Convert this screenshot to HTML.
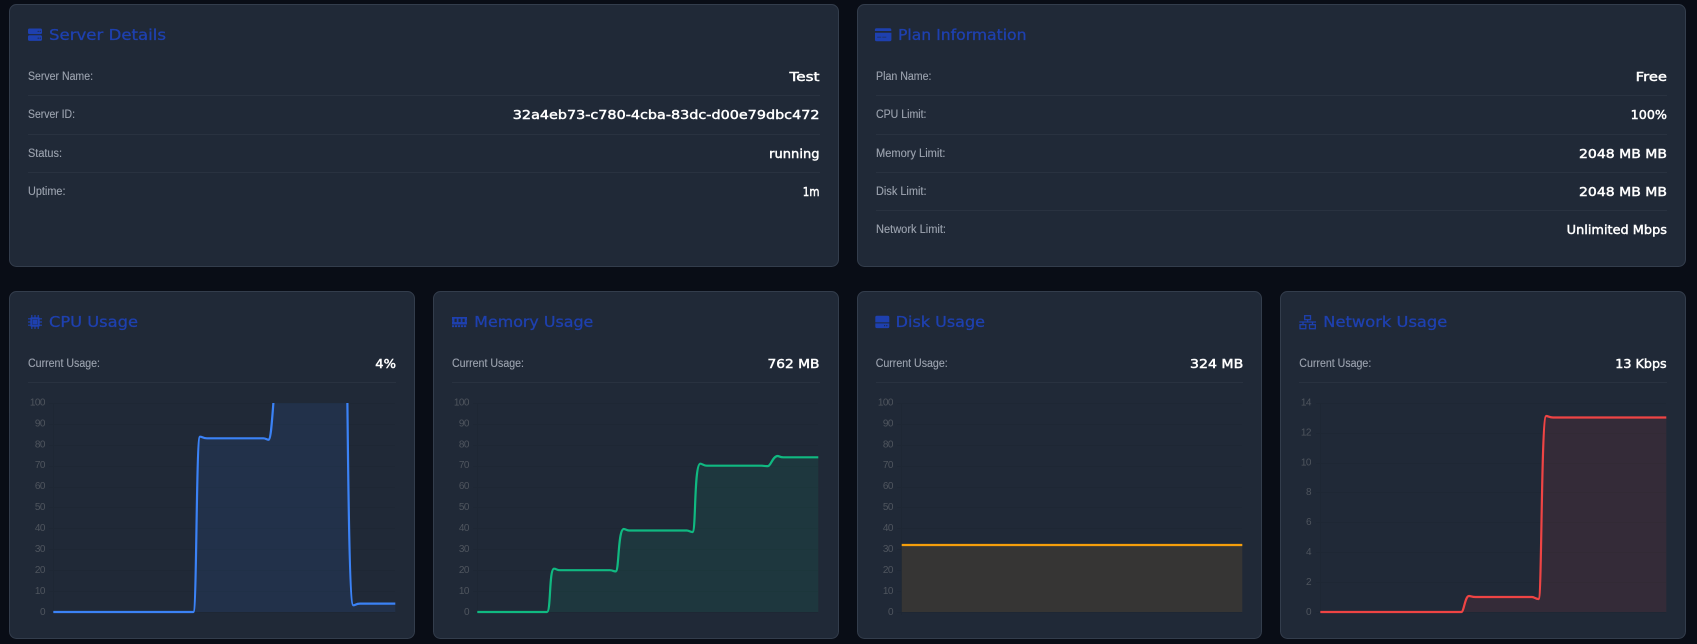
<!DOCTYPE html>
<html lang="en">
<head>
<meta charset="utf-8">
<title>Server Dashboard</title>
<style>
html,body{margin:0;padding:0;background:#090d16;width:1697px;height:644px;overflow:hidden}
svg{display:block}
.card{fill:#202937;stroke:#333d4c;stroke-width:1}
.t{font-family:"DejaVu Sans",sans-serif;font-size:15px;fill:#1e40af;stroke:#1e40af;stroke-width:.3}
.l{font-family:"Liberation Sans",sans-serif;font-size:11.5px;fill:#9ca3af;stroke:#9ca3af;stroke-width:.12}
.v{font-family:"DejaVu Sans",sans-serif;font-size:12.5px;fill:#fff;stroke:#fff;stroke-width:.45;text-anchor:end}
.d{stroke:#293240;stroke-width:1}
.g{stroke:#1e2734;stroke-width:1}
.y{font-family:"Liberation Sans",sans-serif;font-size:10px;fill:#4f555e;text-anchor:end;letter-spacing:-.5px}
.i{fill:#1e40af}
.li{fill:none;stroke-width:2.2}
</style>
</head>
<body>
<svg width="1697" height="644" viewBox="0 0 1697 644" xmlns="http://www.w3.org/2000/svg">
<defs>
<clipPath id="c1"><rect x="50" y="403" width="346" height="211"/></clipPath>
<clipPath id="c2"><rect x="474" y="403" width="346" height="211"/></clipPath>
<clipPath id="c3"><rect x="898" y="403" width="346" height="211"/></clipPath>
<clipPath id="c4"><rect x="1317" y="403" width="350" height="211"/></clipPath>
</defs>

<!-- Cards -->
<rect class="card" x="9.5" y="4.5" width="829" height="262" rx="7"/>
<rect class="card" x="857.5" y="4.5" width="828" height="262" rx="7"/>
<rect class="card" x="9.5" y="291.5" width="405" height="347" rx="7"/>
<rect class="card" x="433.5" y="291.5" width="405" height="347" rx="7"/>
<rect class="card" x="857.5" y="291.5" width="404" height="347" rx="7"/>
<rect class="card" x="1280.5" y="291.5" width="405" height="347" rx="7"/>

<!-- Server Details -->
<rect class="i" x="28" y="28.5" width="14" height="5.6" rx="1.5"/>
<rect class="i" x="28" y="35.3" width="14" height="5.6" rx="1.5"/>
<circle cx="38.2" cy="31.3" r=".6" fill="#202937"/><circle cx="40.2" cy="31.3" r=".6" fill="#202937"/>
<circle cx="38.2" cy="38.1" r=".6" fill="#202937"/><circle cx="40.2" cy="38.1" r=".6" fill="#202937"/>
<text class="t" x="49" y="40" textLength="117" lengthAdjust="spacingAndGlyphs">Server Details</text>
<text class="l" x="28" y="80" textLength="65" lengthAdjust="spacingAndGlyphs">Server Name:</text>
<text class="v" x="819.5" y="81" textLength="30" lengthAdjust="spacingAndGlyphs">Test</text>
<line class="d" x1="28" x2="820" y1="95.5" y2="95.5"/>
<text class="l" x="28" y="118" textLength="47" lengthAdjust="spacingAndGlyphs">Server ID:</text>
<text class="v" x="819.5" y="119" textLength="306.7" lengthAdjust="spacingAndGlyphs">32a4eb73-c780-4cba-83dc-d00e79dbc472</text>
<line class="d" x1="28" x2="820" y1="134.5" y2="134.5"/>
<text class="l" x="28" y="157" textLength="34" lengthAdjust="spacingAndGlyphs">Status:</text>
<text class="v" x="819.5" y="158" textLength="50.3" lengthAdjust="spacingAndGlyphs">running</text>
<line class="d" x1="28" x2="820" y1="172.5" y2="172.5"/>
<text class="l" x="28" y="195" textLength="37.5" lengthAdjust="spacingAndGlyphs">Uptime:</text>
<text class="v" x="819.5" y="196" textLength="16.7" lengthAdjust="spacingAndGlyphs">1m</text>

<!-- Plan Information -->
<path class="i" d="M876.5 28.2h13.2a1.6 1.6 0 0 1 1.6 1.6v1.2h-16.4v-1.2a1.6 1.6 0 0 1 1.6-1.6z"/>
<path class="i" d="M875 32.8h16.4v6.8a1.6 1.6 0 0 1-1.6 1.6h-13.2a1.6 1.6 0 0 1-1.6-1.6z"/>
<rect x="877.2" y="36.8" width="4" height=".7" fill="#202937" opacity=".8"/><rect x="882.3" y="36.8" width="4" height=".7" fill="#202937" opacity=".8"/>
<text class="t" x="898" y="40" textLength="128.5" lengthAdjust="spacingAndGlyphs">Plan Information</text>
<text class="l" x="876" y="80" textLength="55.5" lengthAdjust="spacingAndGlyphs">Plan Name:</text>
<text class="v" x="1667" y="81" textLength="31.3" lengthAdjust="spacingAndGlyphs">Free</text>
<line class="d" x1="876" x2="1667" y1="95.5" y2="95.5"/>
<text class="l" x="876" y="118" textLength="50.5" lengthAdjust="spacingAndGlyphs">CPU Limit:</text>
<text class="v" x="1667" y="119" textLength="36.3" lengthAdjust="spacingAndGlyphs">100%</text>
<line class="d" x1="876" x2="1667" y1="134.5" y2="134.5"/>
<text class="l" x="876" y="157" textLength="69.5" lengthAdjust="spacingAndGlyphs">Memory Limit:</text>
<text class="v" x="1667" y="158" textLength="88" lengthAdjust="spacingAndGlyphs">2048 MB MB</text>
<line class="d" x1="876" x2="1667" y1="172.5" y2="172.5"/>
<text class="l" x="876" y="195" textLength="50.5" lengthAdjust="spacingAndGlyphs">Disk Limit:</text>
<text class="v" x="1667" y="196" textLength="88" lengthAdjust="spacingAndGlyphs">2048 MB MB</text>
<line class="d" x1="876" x2="1667" y1="210.5" y2="210.5"/>
<text class="l" x="876" y="233" textLength="70" lengthAdjust="spacingAndGlyphs">Network Limit:</text>
<text class="v" x="1667" y="234" textLength="100.3" lengthAdjust="spacingAndGlyphs">Unlimited Mbps</text>

<!-- CPU -->
<rect class="i" x="30.3" y="317.3" width="9.4" height="9.4" rx="1"/>
<rect x="32.4" y="319.4" width="5.2" height="5.2" fill="none" stroke="#202937" stroke-width=".5" opacity=".7"/>
<path d="M31.8 315v14M35 315v14M38.2 315v14M28 318.8h14M28 322h14M28 325.2h14" stroke="#1e40af" stroke-width="1.2" fill="none" stroke-dasharray="2.6 8.8 2.6 0"/>
<text class="t" x="49" y="327" textLength="89" lengthAdjust="spacingAndGlyphs">CPU Usage</text>
<text class="l" x="28" y="367" textLength="72" lengthAdjust="spacingAndGlyphs">Current Usage:</text>
<text class="v" x="396" y="368" textLength="20.7" lengthAdjust="spacingAndGlyphs">4%</text>
<line class="d" x1="28" x2="396" y1="382.5" y2="382.5"/>
<path class="g" fill="none" d="M49 403.5h346M49 424.5h346M49 445.5h346M49 466.5h346M49 487.5h346M49 507.5h346M49 528.5h346M49 549.5h346M49 570.5h346M49 591.5h346M49 612.5h346M53.5 403v212"/>
<g class="y">
<text x="45" y="405.5">100</text><text x="45" y="426.5">90</text><text x="45" y="447.5">80</text><text x="45" y="468">70</text><text x="45" y="489">60</text><text x="45" y="510">50</text><text x="45" y="531">40</text><text x="45" y="552">30</text><text x="45" y="573">20</text><text x="45" y="594">10</text><text x="45" y="615">0</text>
</g>
<g clip-path="url(#c1)">
<path d="M53.3 612L193.3 612C197 612 196 437 200 436.7C202 436.6 203 438.3 207 438.3L263.3 438.3C266 438.3 267 440 268.7 439.7C271 439 272 420 274 395L347.3 395C348 450 349 605 353.3 605.3C355 605.4 356 603.6 360 603.6L395.3 603.6L395.3 612Z" fill="#3b82f6" opacity=".1"/>
<path class="li" stroke="#3b82f6" d="M53.3 612L193.3 612C197 612 196 437 200 436.7C202 436.6 203 438.3 207 438.3L263.3 438.3C266 438.3 267 440 268.7 439.7C271 439 272 420 274 395M347.3 395C348 450 349 605 353.3 605.3C355 605.4 356 603.6 360 603.6L395.3 603.6"/>
</g>

<!-- Memory -->
<path class="i" d="M452 317h15v3.2a1 1 0 0 0 0 1.6v2.7h-15v-2.7a1 1 0 0 0 0-1.6z"/>
<rect x="454.5" y="318.7" width="2.2" height="3.4" fill="#202937"/><rect x="458.5" y="318.7" width="2.2" height="3.4" fill="#202937"/><rect x="462.5" y="318.7" width="2.2" height="3.4" fill="#202937"/>
<path d="M452 326.2h15" stroke="#1e40af" stroke-width="1.8" stroke-dasharray="2.2 .8" fill="none"/>
<text class="t" x="474.3" y="327" textLength="119" lengthAdjust="spacingAndGlyphs">Memory Usage</text>
<text class="l" x="452" y="367" textLength="72" lengthAdjust="spacingAndGlyphs">Current Usage:</text>
<text class="v" x="819.5" y="368" textLength="52" lengthAdjust="spacingAndGlyphs">762 MB</text>
<line class="d" x1="452" x2="820" y1="382.5" y2="382.5"/>
<path class="g" fill="none" d="M473 403.5h345M473 424.5h345M473 445.5h345M473 466.5h345M473 487.5h345M473 507.5h345M473 528.5h345M473 549.5h345M473 570.5h345M473 591.5h345M473 612.5h345M477.5 403v212"/>
<g class="y">
<text x="469" y="405.5">100</text><text x="469" y="426.5">90</text><text x="469" y="447.5">80</text><text x="469" y="468">70</text><text x="469" y="489">60</text><text x="469" y="510">50</text><text x="469" y="531">40</text><text x="469" y="552">30</text><text x="469" y="573">20</text><text x="469" y="594">10</text><text x="469" y="615">0</text>
</g>
<g clip-path="url(#c2)">
<path d="M477.3 612L547 612C551 612 549 569 554 568.7C556 568.6 557 570.2 560 570.2L610 570.2C613 570.2 614 571.8 616 571.3C619 570 618 529.5 623.7 529C625.5 528.9 626.5 530.5 629 530.5L686.7 530.5C689 530.5 690.5 532.3 692.7 532C696 531 694 464 700.3 463.7C702 463.6 703.5 465.7 706.7 465.7L761.7 465.7C764 465.7 766 466.5 768.3 466C771 465 773 456 777.7 456C779 456 780 457.3 783.3 457.3L818.3 457.3L818.3 612Z" fill="#10b981" opacity=".1"/>
<path class="li" stroke="#10b981" d="M477.3 612L547 612C551 612 549 569 554 568.7C556 568.6 557 570.2 560 570.2L610 570.2C613 570.2 614 571.8 616 571.3C619 570 618 529.5 623.7 529C625.5 528.9 626.5 530.5 629 530.5L686.7 530.5C689 530.5 690.5 532.3 692.7 532C696 531 694 464 700.3 463.7C702 463.6 703.5 465.7 706.7 465.7L761.7 465.7C764 465.7 766 466.5 768.3 466C771 465 773 456 777.7 456C779 456 780 457.3 783.3 457.3L818.3 457.3"/>
</g>

<!-- Disk -->
<path class="i" d="M876.8 315.7h11a1.5 1.5 0 0 1 1.5 1.5v5.2h-14v-5.2a1.5 1.5 0 0 1 1.5-1.5z"/>
<path class="i" d="M875.3 323.4h14v3.2a1.5 1.5 0 0 1-1.5 1.5h-11a1.5 1.5 0 0 1-1.5-1.5z"/>
<circle cx="884.6" cy="325.7" r=".6" fill="#202937"/><circle cx="886.8" cy="325.7" r=".6" fill="#202937"/>
<text class="t" x="895.7" y="327" textLength="89.3" lengthAdjust="spacingAndGlyphs">Disk Usage</text>
<text class="l" x="875.7" y="367" textLength="72" lengthAdjust="spacingAndGlyphs">Current Usage:</text>
<text class="v" x="1243.3" y="368" textLength="53.3" lengthAdjust="spacingAndGlyphs">324 MB</text>
<line class="d" x1="876" x2="1243" y1="382.5" y2="382.5"/>
<path class="g" fill="none" d="M897 403.5h345M897 424.5h345M897 445.5h345M897 466.5h345M897 487.5h345M897 507.5h345M897 528.5h345M897 549.5h345M897 570.5h345M897 591.5h345M897 612.5h345M901.5 403v212"/>
<g class="y">
<text x="893" y="405.5">100</text><text x="893" y="426.5">90</text><text x="893" y="447.5">80</text><text x="893" y="468">70</text><text x="893" y="489">60</text><text x="893" y="510">50</text><text x="893" y="531">40</text><text x="893" y="552">30</text><text x="893" y="573">20</text><text x="893" y="594">10</text><text x="893" y="615">0</text>
</g>
<rect x="901.7" y="545" width="340.6" height="67" fill="#363534"/>
<g clip-path="url(#c3)">
<path class="li" stroke="#f59e0b" d="M901.7 545H1242.3"/>
</g>

<!-- Network -->
<g fill="none" stroke="#1e40af" stroke-width="1.3">
<rect x="1304.7" y="315.7" width="5.8" height="4"/>
<rect x="1300" y="324.7" width="5.8" height="4"/>
<rect x="1309.5" y="324.7" width="5.8" height="4"/>
<path d="M1299.3 322h16.7M1307.6 320v2M1303 322v2.5M1312.5 322v2.5"/>
</g>
<text class="t" x="1323.3" y="327" textLength="124" lengthAdjust="spacingAndGlyphs">Network Usage</text>
<text class="l" x="1299.3" y="367" textLength="72" lengthAdjust="spacingAndGlyphs">Current Usage:</text>
<text class="v" x="1666.7" y="368" textLength="51.4" lengthAdjust="spacingAndGlyphs">13 Kbps</text>
<line class="d" x1="1299" x2="1667" y1="382.5" y2="382.5"/>
<path class="g" fill="none" d="M1316 403.5h350M1316 433.5h350M1316 463.5h350M1316 492.5h350M1316 522.5h350M1316 552.5h350M1316 582.5h350M1316 612.5h350M1320.5 403v212"/>
<g class="y">
<text x="1311" y="405.5">14</text><text x="1311" y="435.5">12</text><text x="1311" y="465.5">10</text><text x="1311" y="495">8</text><text x="1311" y="525">6</text><text x="1311" y="555">4</text><text x="1311" y="585">2</text><text x="1311" y="615">0</text>
</g>
<g clip-path="url(#c4)">
<path d="M1320.3 612L1461.3 612C1464 612 1465 596 1469 596C1471 596 1472 597 1475.3 597L1532 597C1534.5 597 1536 599.3 1538.7 599C1542 598 1541 416 1546.3 416C1548 416 1549.5 417.5 1553 417.5L1666.3 417.5L1666.3 612Z" fill="#ef4444" opacity=".1"/>
<path class="li" stroke="#ef4444" d="M1320.3 612L1461.3 612C1464 612 1465 596 1469 596C1471 596 1472 597 1475.3 597L1532 597C1534.5 597 1536 599.3 1538.7 599C1542 598 1541 416 1546.3 416C1548 416 1549.5 417.5 1553 417.5L1666.3 417.5"/>
</g>
</svg>
</body>
</html>
